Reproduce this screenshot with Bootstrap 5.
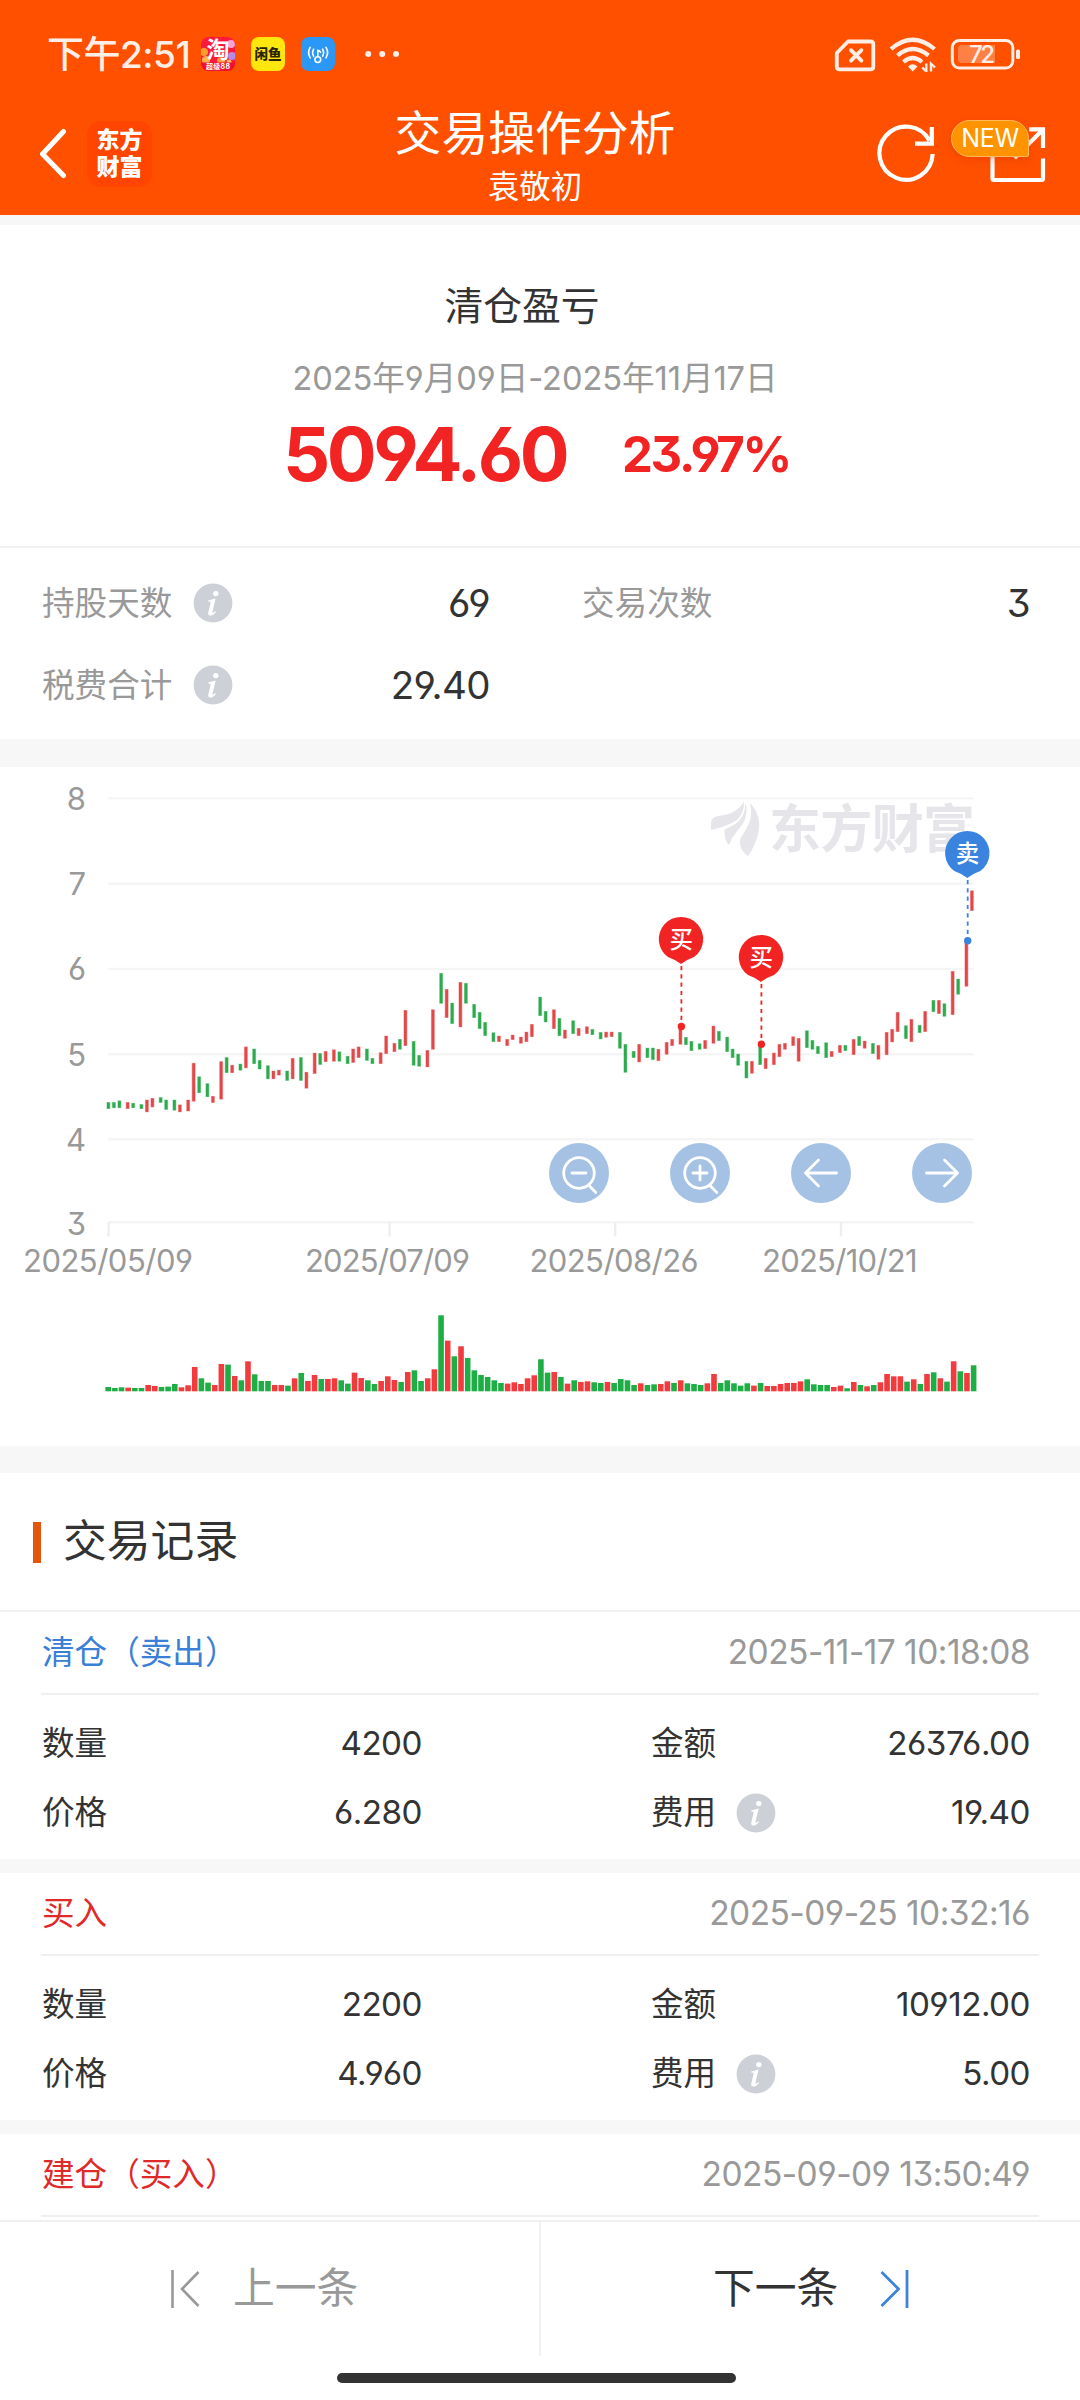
<!DOCTYPE html>
<html lang="zh-CN">
<head>
<meta charset="utf-8">
<meta name="viewport" content="width=device-width, initial-scale=1">
<title>交易操作分析</title>
<link rel="stylesheet" href="https://cdn.jsdelivr.net/npm/bootstrap@5.3.0/dist/css/bootstrap.min.css">
<style>
  :root { --brand:#ff5000; --up:#f22323; --sell:#3a84e0; --ink:#333; --dim:#999; --line:#ececec; --band:#f7f7f7; }
  body { width:1080px; height:2400px; overflow:hidden; background:#fff; color:var(--ink);
    font-family:Inter,"Noto Sans CJK SC",sans-serif; font-size:33px; line-height:1;
    font-feature-settings:"cv03","cv04","cv09"; }
  svg { display:block; flex:none; }
  .top-area { background:var(--brand); height:215px; }
  .status-row { height:108px; padding:0 60px 0 47px; color:#ffeee5; }
  .clock { font-size:37px; width:148px; margin-right:6px; font-weight:500; letter-spacing:-.5px; }
  .app-row { height:96px; }
  .side-left { width:270px; padding-left:40px; }
  .side-right { width:280px; padding-left:106px; position:relative; }
  .em-logo { width:65px; height:66px; border-radius:14px; background:#ff4500; font-size:23px; line-height:27px; font-weight:900; margin-left:21px; }
  .page-name { font-size:46.8px; line-height:56px; padding-top:1px; }
  .user-name { font-size:31.4px; line-height:44px; }
  .new-tag { left:151px; top:-3px; width:78px; height:37px; border-radius:19px 19px 2px 19px; background:#ff9400; border:1px solid #ffb75c; font-size:25px; box-shadow:0 3px 8px rgba(200,50,0,.3); letter-spacing:-.4px; }
  .gap-strip { background:var(--band); }
  .summary { height:321px; padding-top:56px; }
  .sum-title { font-size:38.8px; line-height:50px; margin-right:36px; }
  .sum-range { font-size:32.6px; line-height:44px; margin-top:25px; margin-right:10px; color:var(--dim); letter-spacing:-.05px; }
  .sum-main { margin-top:14px; height:80px; color:var(--up); padding-left:283px; }
  .profit { font-size:74px; width:339px; font-weight:650; letter-spacing:-3.5px; }
  .rate { font-size:49px; font-weight:650; letter-spacing:-2.3px; padding-top:1px; }
  .facts { border-top:2px solid #f2f2f2; height:193px; padding:14px 50px 0 42px; }
  .fact { height:82px; }
  .fact-l { width:448px; margin-right:92px; }
  .fact-k { font-size:32.6px; color:var(--dim); }
  .fact-v { font-size:38.5px; letter-spacing:-.6px; }
  .chart-box { height:679px; position:relative; }
  .tools { left:549px; top:376px; gap:61px; }
  .tools .btn { width:60px; height:60px; background:#a5c2e4; }
  .sec-title { height:139px; padding:1px 0 0 33px; border-bottom:2px solid #f2f2f2; font-size:43.8px; }
  .sec-bar { width:8px; height:41px; background:#e4560b; margin-right:22px; }
  .rec-head { height:83px; margin:0 41px; padding:0 9px 0 1px; border-bottom:2px solid #f0f0f0; font-size:32.6px; }
  .rec-time { color:var(--dim); font-size:33.5px; letter-spacing:-.55px; }
  .rec-body { height:164px; padding:14px 50px 0 42px; }
  .rec-row { height:69px; font-size:32.6px; }
  .rec-row b { font-weight:400; font-size:33.2px; letter-spacing:-.5px; }
  .half-l { width:380px; margin-right:229px; }
  .txt-buy { color:#e02a2a; } .txt-sell { color:#3a80d6; }
  .pager { height:180px; background:#fff; border-top:2px solid #f0f0f0; }
  .pager a { height:134px; width:541px; font-size:41.8px; color:var(--ink); text-decoration:none; }
  .pager a.prev { color:var(--dim); border-right:2px solid #f2f2f2; padding-left:170px; }
  .pager a.next { padding-left:172px; width:539px; }
  .home-bar { width:399px; height:10px; border-radius:5px; background:#333; margin:17px 0 0 337px; }
</style>
</head>
<body>
<svg width="0" height="0" class="position-absolute">
  <symbol id="info" viewBox="0 0 40 40">
    <circle cx="20" cy="20" r="19.4" fill="#cdd0d6"/>
    <circle cx="22.8" cy="10.6" r="2.7" fill="#fff"/>
    <path d="M15.2 17.4 Q19 16.8 22.6 15.6 L19.4 29 Q19.2 30.6 22.4 28.2 L23 28.9 Q19.8 32.8 17 32.6 Q14.6 32.2 15.4 29 L17.7 19.6 Q17.9 18.4 15.1 18.5 Z" fill="#fff"/>
  </symbol>
</svg>

<header class="top-area text-white">
  <div class="status-row d-flex align-items-center">
    <span class="clock text-nowrap">下午2:51</span>
    <svg width="34" height="34" viewBox="0 0 34 34">
      <defs><clipPath id="tb"><rect width="34" height="34" rx="8"/></clipPath></defs>
      <g clip-path="url(#tb)"><rect width="34" height="34" fill="#fb1a3e"/>
      <circle cx="30" cy="7" r="4" fill="#f6a4d8"/><circle cx="3" cy="15" r="4" fill="#ff9c2e"/><circle cx="31" cy="19" r="4" fill="#b58be8"/><circle cx="5" cy="23" r="4" fill="#ffb14a"/><circle cx="20" cy="24" r="4" fill="#ff9a3a"/><circle cx="28" cy="25" r="2.5" fill="#ffc06a"/>
      <rect y="25.500" width="34" height="8.500" fill="#f0102e"/></g>
      <text x="17" y="20.500" text-anchor="middle" font-size="23" font-weight="700" fill="#fff">淘</text>
      <text x="5" y="32.300" font-size="7" font-weight="700" fill="#fff" textLength="24">超级88</text>
    </svg>
    <svg width="34" height="34" viewBox="0 0 34 34" style="margin-left:16px">
      <rect width="34" height="34" rx="8" fill="#ffe60f"/>
      <text x="17" y="22" text-anchor="middle" font-size="13.6" font-weight="900" fill="#2a2500">闲鱼</text>
    </svg>
    <svg width="34" height="34" viewBox="0 0 34 34" style="margin-left:16px">
      <rect width="34" height="34" rx="8" fill="#2b97f7"/>
      <g fill="none" stroke="#fff" stroke-width="1.6" stroke-linecap="round">
        <circle cx="16.8" cy="22.6" r="2.9"/><path d="M16.8 19.5V13.4q2 .2 2.7 1.8M12.6 12.2q-2 3.4 0 7M9.2 10.4q-3.2 5 0 10.4M21.6 12.2q2 3.4 0 7M25 10.4q3.2 5 0 10.4"/></g>
    </svg>
    <svg width="34" height="8" viewBox="0 0 34 8" style="margin-left:30px" fill="#ffeee5"><circle cx="3.2" cy="4" r="3"/><circle cx="17.2" cy="4" r="3"/><circle cx="31" cy="4" r="3"/></svg>
    <svg class="ms-auto" width="186" height="36" viewBox="834 36 186 36" fill="none" stroke="#ffeee5">
      <path d="M848 41.5H870.5Q873.3 41.5 873.3 44.3V66.5Q873.3 69.3 870.5 69.3H839.5Q836.8 69.3 836.8 66.5V53Z" stroke-width="3.8" stroke-linejoin="round"/>
      <path d="M851 50.2 861.4 60.6M861.4 50.2 851 60.6" stroke-width="3.8" stroke-linecap="round"/>
      <g stroke-width="4.2"><path d="M891 49Q912.5 30.500 934.500 49M897.500 55.500Q912.500 42.500 928.500 55.500M903.500 62Q912.500 54 922 62"/></g>
      <path d="M908 66.500Q912.500 61.800 917.500 66.500L912.700 71.500Z" fill="#ffeee5" stroke="none"/>
      <path d="M926.300 63.500V71.500L922.300 67.600M931 71.500V63.700L935 67.500" stroke-width="2.400"/>
      <rect x="952.300" y="40.500" width="60.500" height="27.500" rx="7" stroke-width="3"/>
      <path d="M962 45H995V63H962Q958 63 958 59V49Q958 45 962 45Z" fill="#ff8044" stroke="none"/>
      <rect x="1016" y="49.500" width="4" height="9.500" rx="1.500" fill="#ffeee5" stroke="none"/>
      <text x="969" y="63" font-size="24" font-weight="500" fill="#ffeee5" stroke="none" textLength="26">72</text>
    </svg>
  </div>
  <div class="app-row d-flex align-items-center">
    <div class="side-left d-flex align-items-center">
      <svg width="26" height="52" viewBox="0 0 26 52" fill="none" stroke="#fff" stroke-width="5" stroke-linecap="round" class="mb-1"><path d="M23.500 3.500 2.500 26 23.500 47.500"/></svg>
      <div class="em-logo text-center d-flex flex-column justify-content-center mb-1"><span>东方</span><span>财富</span></div>
    </div>
    <div class="flex-grow-1 text-center text-nowrap d-flex flex-column gap-1">
      <div class="page-name">交易操作分析</div>
      <div class="user-name">袁敬初</div>
    </div>
    <div class="side-right">
      <svg width="140" height="62" viewBox="906 124 140 62" fill="none" stroke="#fff" stroke-width="4.200" class="overflow-visible mb-1">
        <path d="M932.600 155A26.600 26.600 0 1 1 929.400 141.500M931.800 128V144.600H915"/>
        <path d="M992.500 138V179.500Q992.500 181 994 181H1041.500Q1043 181 1043 179.500V159.500M1029 130.300H1043V149M1042.500 131 1014.500 159"/>
      </svg>
      <div class="new-tag position-absolute d-flex align-items-center justify-content-center">NEW</div>
    </div>
  </div>
</header>
<div class="gap-strip" style="height:10px"></div>

<section class="summary">
  <div class="sum-title text-center">清仓盈亏</div>
  <div class="sum-range text-center">2025年9月09日-2025年11月17日</div>
  <div class="sum-main d-flex align-items-center"><span class="profit">5094.60</span><span class="rate">23.97%</span></div>
</section>

<section class="facts">
  <div class="fact d-flex align-items-center">
    <div class="fact-l d-flex align-items-center"><span class="fact-k">持股天数</span><svg width="40" height="40" style="margin-left:21px"><use href="#info"/></svg><span class="fact-v ms-auto">69</span></div>
    <div class="flex-grow-1 d-flex align-items-center justify-content-between"><span class="fact-k">交易次数</span><span class="fact-v">3</span></div>
  </div>
  <div class="fact d-flex align-items-center">
    <div class="fact-l d-flex align-items-center"><span class="fact-k">税费合计</span><svg width="40" height="40" style="margin-left:21px"><use href="#info"/></svg><span class="fact-v ms-auto">29.40</span></div>
  </div>
</section>
<div class="gap-strip" style="height:28px"></div>

<section class="chart-box">
  <svg id="chart" width="1080" height="679" viewBox="0 767 1080 679">
    <g id="grid" stroke="#f5f5f5" stroke-width="2.400"></g>
    <g fill="#e6e6ea">
      <path d="M711 822Q712 817 718 816Q738 814 744 801Q745 812 737 820Q728 826 711 830Z"/>
      <path d="M745.500 803Q748 812 744 822Q738 830 732 838L729 845Q724 840 724.500 830Q725 829 734 825Q745 818 745.500 803Z"/>
      <path d="M750 803Q762 816 758.500 832Q756 845 748 856Q739 850 740 840Q741 837 745 831Q754 818 750 803Z"/>
      <text x="769" y="848" font-size="52" font-weight="700" textLength="206">东方财富</text>
    </g>
    <g id="candles"></g>
    <g id="labels" fill="#999" font-size="31"></g>
    <g id="volumes"></g>
    <g id="pins"></g>
  </svg>
  <div class="tools position-absolute d-flex">
    <button class="btn rounded-circle border-0 p-0"><svg width="60" height="60" viewBox="-30 -30 60 60" fill="none" stroke="#fff" stroke-width="2.800" stroke-linecap="round"><circle r="15.300"/><path d="M-7 0H7M10.500 13 16.800 19.500"/></svg></button>
    <button class="btn rounded-circle border-0 p-0"><svg width="60" height="60" viewBox="-30 -30 60 60" fill="none" stroke="#fff" stroke-width="2.800" stroke-linecap="round"><circle r="15.300"/><path d="M-7 0H7M0-7V7M10.500 13 16.800 19.500"/></svg></button>
    <button class="btn rounded-circle border-0 p-0"><svg width="60" height="60" viewBox="-30 -30 60 60" fill="none" stroke="#fff" stroke-width="2.800" stroke-linecap="round" stroke-linejoin="round"><path d="M15.500 0H-15.500M-2.500-13-15.500 0-2.500 13"/></svg></button>
    <button class="btn rounded-circle border-0 p-0"><svg width="60" height="60" viewBox="-30 -30 60 60" fill="none" stroke="#fff" stroke-width="2.800" stroke-linecap="round" stroke-linejoin="round"><path d="M-15.500 0H15.500M2.500-13 15.500 0 2.500 13"/></svg></button>
  </div>
</section>
<div class="gap-strip" style="height:27px"></div>

<section>
  <div class="sec-title d-flex align-items-center"><span class="sec-bar"></span>交易记录</div>
  <article>
    <div class="rec-head d-flex align-items-center justify-content-between"><span class="txt-sell">清仓（卖出）</span><span class="rec-time">2025-11-17 10:18:08</span></div>
    <div class="rec-body">
      <div class="rec-row d-flex align-items-center"><div class="half-l d-flex justify-content-between"><span>数量</span><b>4200</b></div><span>金额</span><b class="ms-auto">26376.00</b></div>
      <div class="rec-row d-flex align-items-center"><div class="half-l d-flex justify-content-between"><span>价格</span><b>6.280</b></div><span>费用</span><svg width="40" height="40" style="margin-left:20px"><use href="#info"/></svg><b class="ms-auto">19.40</b></div>
    </div>
  </article>
  <div class="gap-strip" style="height:14px"></div>
  <article>
    <div class="rec-head d-flex align-items-center justify-content-between"><span class="txt-buy">买入</span><span class="rec-time">2025-09-25 10:32:16</span></div>
    <div class="rec-body">
      <div class="rec-row d-flex align-items-center"><div class="half-l d-flex justify-content-between"><span>数量</span><b>2200</b></div><span>金额</span><b class="ms-auto">10912.00</b></div>
      <div class="rec-row d-flex align-items-center"><div class="half-l d-flex justify-content-between"><span>价格</span><b>4.960</b></div><span>费用</span><svg width="40" height="40" style="margin-left:20px"><use href="#info"/></svg><b class="ms-auto">5.00</b></div>
    </div>
  </article>
  <div class="gap-strip" style="height:14px"></div>
  <article>
    <div class="rec-head d-flex align-items-center justify-content-between"><span class="txt-buy">建仓（买入）</span><span class="rec-time">2025-09-09 13:50:49</span></div>
  </article>
</section>

<nav class="pager fixed-bottom">
  <div class="d-flex">
    <a href="#" class="prev d-flex align-items-center"><svg width="30" height="40" viewBox="0 0 30 40" fill="none" stroke="#999" stroke-width="2.600" style="margin-right:33px"><path d="M2.500 1V39M28.500 3 12 20 28.500 37"/></svg>上一条</a>
    <a href="#" class="next d-flex align-items-center">下一条<svg width="30" height="40" viewBox="0 0 30 40" fill="none" stroke="#3d83d9" stroke-width="2.800" style="margin-left:42px"><path d="M27 1V39M1.500 3 18.500 20 1.500 37"/></svg></a>
  </div>
  <div class="home-bar"></div>
</nav>

<script src="https://cdn.jsdelivr.net/npm/bootstrap@5.3.0/dist/js/bootstrap.bundle.min.js"></script>
<script>
  const NS = 'http://www.w3.org/2000/svg';
  const add = (id, tag, attrs, text) => {
    const e = document.createElementNS(NS, tag);
    for (const k in attrs) e.setAttribute(k, attrs[k]);
    if (text) e.textContent = text;
    document.getElementById(id).appendChild(e);
  };
  // Price axis: 3 to 8
  [[8,798.4],[7,883.7],[6,969],[5,1054.3],[4,1139.3],[3,1222.3]].forEach(([v,y]) => {
    add('grid','line',{x1:108.3,x2:973.6,y1:y,y2:y});
    add('labels','text',{x:86,y:(v===3?1223.8:y)+11.4,'text-anchor':'end'},String(v));
  });
  [108.6,389.5,615.2,841].forEach(x => add('grid','line',{x1:x,x2:x,y1:1222.3,y2:1236.5,stroke:'#eee'}));
  [[23,170,'2025/05/09'],[305,165,'2025/07/09'],[529.5,169,'2025/08/26'],[762,155.5,'2025/10/21']].forEach(([x,w,t]) =>
    add('labels','text',{x:x,y:1271.8,textLength:w},t));

  // Daily ranges: [top, bottom, r|g], in chart pixels, grouped by the scale of the series
  const s1 = 'g838-855 g838-853 g834-853 r838-855 g840-853 g843-855 r832-863 r828-851 g826-840 g832-857 g832-859 r844-863 r832-861 r742-837 g775-816 g792-826 r823-840 r738-832 g728-767 r747-767 g744-761 r702-755 g707-745 g735-758 g748-782 r761-782 r759-773 g761-786 r730-782 g728-786 r764-805 r717-769 g718-747 r713-740 r709-739 g714-739 g725-745 r707-742 r702-730 g707-737 g730-745'.split(' ');
  const s2 = 'r457-492 r407-462 r429-456 g417-449 r330-438 g423-497 g465-500 r450-502 r328-449 g219-311 r267-354 g308-372 r246-382 g249-311 g312-354 g336-387 g366-408 g397-426 r407-426 r417-438 r404-420 r410-431 r395-426 r372-411 g290-348 g333-367 r328-387 g354-408 r389-416 g361-402 r384-408 r379-402 g387-405 g396-418 r395-413 r395-411 g396-446 g432-518 g453-474 r432-487 g443-474 g443-480 r447-483 r426-464 r417-438 r380-434 g411-435 g423-453 g430-449 r420-447 r377-431 g393-423 g410-456 g446-474 g461-497 g483-535 r483-521'.split(' ');
  const s3 = 'g853-915 r894-927 r878-915 r852-891 r849-869 r829-858 r834-905 g811-864 g840-869 g858-882 g847-894 r873-891 r855-879 g855-873 r837-885 g828-858 r842-866 g849-882 r855-899 r816-885 r807-847 r756-816 g796-837 r777-846 g795-819 r753-816 g720-756 r720-762 g730-770 r633-765 g656-704 r543-680 r391-453'.split(' ');
  const days = [];
  [[s1,2.45,760],[s2,3,900],[s3,3,760]].forEach(([list,k,o]) => list.forEach(d => {
    const [a,b] = d.slice(1).split('-').map(Number);
    days.push([d[0], a/k+o, b/k+o]);
  }));
  const col = {r:'#e0484a', g:'#2fa84f'}, pale = {r:'#f6b0b2', g:'#9fdfb2'};
  days.forEach(([c,t,b],i) => {
    const x = 108.4 + 2.75*Math.floor(i*2.42);
    add('candles','rect',{x:x-2,y:t,width:4,height:b-t,fill:pale[c]});
    add('candles','rect',{x:x-1.4,y:t+.4,width:2.8,height:b-t-.8,fill:col[c]});
  });
  // Volumes: bar tops over a base of 573, three units per pixel
  const vol = 'g561 g564 g562 r563 g564 g564 r555 r558 g561 g560 g552 r562 r556 r501 g535 g548 r555 r492 g494 r528 g541 r484 g523 g543 g543 r555 r555 g557 r535 g519 r543 r525 g537 r537 r535 g541 g551 r518 r534 g541 g552 r543 r529 r540 g546 r516 g511 g543 r535 r508 g346 r422 g469 r439 g474 g511 g525 g531 g541 g549 r551 r547 r552 r535 r526 g478 g518 r516 g531 r551 g541 r546 r544 g547 g549 r546 g549 g537 g541 g555 r550 g555 g553 r552 r544 g549 r541 g550 g552 g555 r550 r522 g549 g541 g550 g557 g550 r557 g549 r558 r558 r552 r549 r549 r544 g538 g553 g555 g555 r561 r557 g565 r546 g555 r559 g555 r547 r522 r529 r529 g545 r538 g552 r522 g517 r535 g545 r484 g514 r519 g496'.split(' ');
  vol.forEach((v,i) => {
    const h = (574 - v.slice(1))/3, x = 108.2 + i*6.657;
    add('volumes','rect',{x:x-2.8,y:1391.3-h,width:5.6,height:h,fill:v[0]==='r'?'#f23b3e':'#1fae45'});
  });
  // Trade markers
  [[681,917,1026.5,'买','#f22323'],[761,935,1044.3,'买','#f22323'],[967.3,831,940.7,'卖','#3a84e0']].forEach(([x,t,d,s,c]) => {
    add('pins','line',{x1:x+.4,x2:x+.4,y1:t+49,y2:d,stroke:c,'stroke-width':1.8,'stroke-dasharray':'4.200 4.100'});
    add('pins','circle',{cx:x+.4,cy:d,r:3.7,fill:c});
    add('pins','path',{d:`M${x} ${t+47}Q${x-5} ${t+43} ${x-13} ${t+40.1}A22.200 22.200 0 1 1 ${x+13} ${t+40.1}Q${x+5} ${t+43} ${x} ${t+47}Z`,fill:c});
    add('pins','text',{x:x+.3,y:t+31,'text-anchor':'middle','font-size':23.5,'font-weight':500,fill:'#fff'},s);
  });
</script>
</body>
</html>
